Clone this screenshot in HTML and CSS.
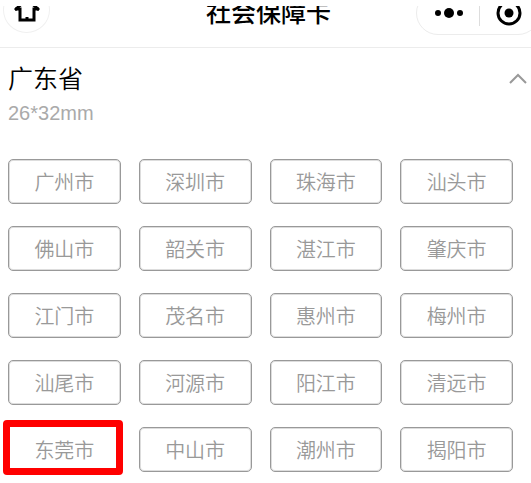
FILE: index.html
```
<!DOCTYPE html>
<html lang="zh-CN">
<head>
  <meta charset="UTF-8">
  <meta name="viewport" content="width=device-width, initial-scale=1">
  <title>社会保障卡</title>
  <link rel="stylesheet" href="styles.css">
</head>
<body>
  <header class="header">
    <div class="nav">
      <button class="home" type="button" aria-label="首页">
        <svg width="28" height="28" viewBox="0 0 28 28" fill="none" stroke="#000" stroke-width="3">
          <path d="M2 14 L14 3 L26 14"/>
          <path d="M2 13 H7 V24 H21 V13 H26"/>
          <path d="M14 21 V24"/>
        </svg>
      </button>
      <h1 class="title">社会保障卡</h1>
      <div class="capsule">
        <button class="cap-btn" type="button" aria-label="更多">
          <svg width="30" height="12" viewBox="0 0 30 12">
            <circle cx="4" cy="6" r="3"/>
            <circle cx="15" cy="6" r="5"/>
            <circle cx="26" cy="6" r="3"/>
          </svg>
        </button>
        <button class="cap-btn" type="button" aria-label="关闭">
          <svg width="26" height="26" viewBox="0 0 26 26">
            <circle cx="13" cy="13" r="11" fill="none" stroke="#000" stroke-width="3"/>
            <circle cx="13" cy="13" r="4.500"/>
          </svg>
        </button>
      </div>
    </div>
  </header>

  <main>
    <div class="province">
      <div>
        <h2 class="name">广东省</h2>
        <p class="size">26*32mm</p>
      </div>
      <button class="toggle" type="button" aria-label="收起">
        <svg width="20" height="12" viewBox="0 0 20 12" fill="none" stroke="#999" stroke-width="2">
          <path d="M2 10 L10 2 L18 10"/>
        </svg>
      </button>
    </div>

    <div class="cities">
      <button class="city" type="button">广州市</button>
      <button class="city" type="button">深圳市</button>
      <button class="city" type="button">珠海市</button>
      <button class="city" type="button">汕头市</button>
      <button class="city" type="button">佛山市</button>
      <button class="city" type="button">韶关市</button>
      <button class="city" type="button">湛江市</button>
      <button class="city" type="button">肇庆市</button>
      <button class="city" type="button">江门市</button>
      <button class="city" type="button">茂名市</button>
      <button class="city" type="button">惠州市</button>
      <button class="city" type="button">梅州市</button>
      <button class="city" type="button">汕尾市</button>
      <button class="city" type="button">河源市</button>
      <button class="city" type="button">阳江市</button>
      <button class="city" type="button">清远市</button>
      <button class="city marked" type="button">东莞市</button>
      <button class="city" type="button">中山市</button>
      <button class="city" type="button">潮州市</button>
      <button class="city" type="button">揭阳市</button>
    </div>
  </main>
</body>
</html>
```
FILE: styles.css
```
* {
  box-sizing: border-box;
}
body {
  margin: 0;
  padding-top: 6px;
  background: #fff;
  font-family: "Noto Sans CJK SC", sans-serif;
  overflow-x: hidden;
}
h1, h2, p {
  margin: 0;
}
button {
  padding: 0;
  background: none;
  border: none;
  font-family: inherit;
}
svg {
  display: block;
}

/* top bar, scrolled partly out of view */
.header {
  overflow: hidden;
  padding-bottom: 12px;
  border-bottom: 1px solid #ececec;
}
.nav {
  display: grid;
  grid-template-columns: 1fr auto 1fr;
  grid-template-rows: 44px;
  align-items: center;
  margin: -15px -9px 0 3px;
}
.home {
  display: flex;
  justify-content: center;
  align-items: center;
  width: 47px;
  height: 46px;
  margin-bottom: 6px;
  border: 1px solid #f0f0f0;
  border-radius: 50%;
}
.title {
  margin-right: 6px;
  padding-bottom: 4px;
  font-size: 25px;
  font-weight: 500;
  line-height: 40px;
}
.capsule {
  display: flex;
  justify-self: end;
  align-items: center;
  width: 124px;
  height: 44px;
  padding-left: 2px;
  border: 1px solid #ececec;
  border-radius: 22px;
}
.cap-btn {
  display: flex;
  flex: 1;
  justify-content: center;
  align-items: center;
  height: 26px;
}
.cap-btn + .cap-btn {
  border-left: 1px solid #ddd;
}

.province {
  display: flex;
  justify-content: space-between;
  align-items: flex-start;
  padding: 11px 3px 0 8px;
}
.name {
  color: #000;
  font-size: 25px;
  font-weight: 350;
  line-height: 36px;
}
.size {
  color: #aaa;
  font-family: "Liberation Sans", sans-serif;
  font-size: 20px;
  line-height: 36px;
}
.toggle {
  padding-top: 14px;
}

.cities {
  display: grid;
  grid-template-columns: repeat(4, 1fr);
  gap: 22px 18px;
  padding: 28px 18px 8px 8px;
}
.city {
  height: 45px;
  border: 1px solid #999;
  border-radius: 5px;
  box-shadow: inset 0 0 0 1px #ddd;
  color: #999;
  font-size: 20px;
  font-weight: 350;
}
.marked {
  position: relative;
  border-color: transparent;
  box-shadow: none;
}
/* red frame round the chosen city */
.marked::after {
  content: "";
  position: absolute;
  inset: -8px -3px -4px -6px;
  border: 7px solid #f00;
  border-radius: 4px;
}
```
